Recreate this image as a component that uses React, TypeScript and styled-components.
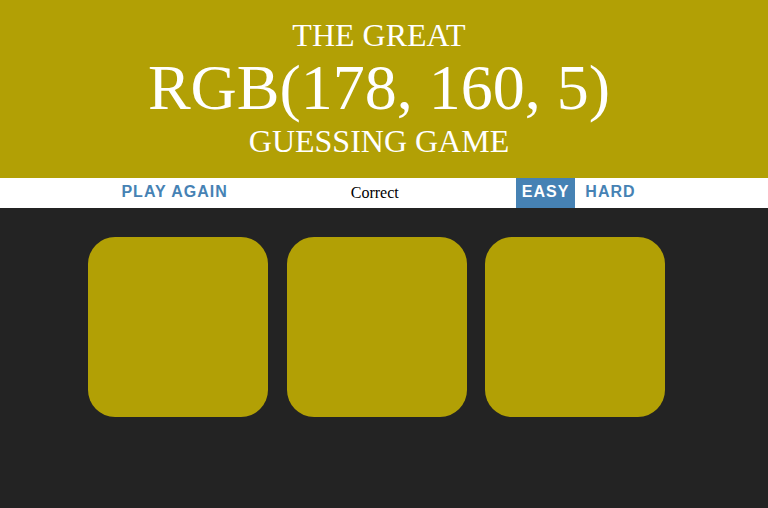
import React from "react";
import styled, { createGlobalStyle } from "styled-components";

const GAME_COLOR = "rgb(178, 160, 5)";

const GlobalStyle = createGlobalStyle`
  html, body {
    margin: 0;
    padding: 0;
    background: #232323;
  }
  body {
    font-family: "Liberation Serif", "Times New Roman", serif;
    font-size: 16px;
  }
`;

const Page = styled.div`
  padding-right: 15px;
`;

const Title = styled.h1<{ $bg: string }>`
  margin: 0 -15px 0 0;
  padding: 18px 10px 19px 0;
  background: ${(p) => p.$bg};
  color: #fff;
  text-align: center;
  text-transform: uppercase;
  font-weight: normal;
  font-size: 32px;
  line-height: 1.1;
`;

const ColorDisplay = styled.span`
  font-size: 200%;
`;

const Stripe = styled.div`
  margin-right: -15px;
  padding-right: 11px;
  height: 30px;
  background: #fff;
  display: flex;
  justify-content: center;
  align-items: stretch;
  gap: 4px;
`;

const StripeButton = styled.button<{ $selected?: boolean }>`
  border: none;
  margin: 0;
  padding: 0 6px 2px;
  height: 100%;
  background: ${(p) => (p.$selected ? "steelblue" : "none")};
  color: ${(p) => (p.$selected ? "#fff" : "steelblue")};
  font-family: "Liberation Sans", Arial, sans-serif;
  font-weight: 700;
  font-size: 16px;
  letter-spacing: 1px;
  text-transform: uppercase;
  outline: none;
  cursor: pointer;
`;

const Message = styled.span`
  width: 274px;
  display: flex;
  align-items: center;
  justify-content: center;
  color: #000;
  font-size: 16px;
`;

const Container = styled.div`
  max-width: 600px;
  margin: 19px auto;
  padding-top: 10px;
  display: flex;
  justify-content: center;
  gap: 18.6px;
`;

const Square = styled.div<{ $color: string }>`
  width: 30%;
  aspect-ratio: 1 / 1;
  border-radius: 15%;
  background: ${(p) => p.$color};
`;

export default function App() {
  const colors = [GAME_COLOR, GAME_COLOR, GAME_COLOR];
  return (
    <>
      <GlobalStyle />
      <Page>
        <Title $bg={GAME_COLOR}>
          The Great
          <br />
          <ColorDisplay>RGB(178, 160, 5)</ColorDisplay>
          <br />
          Guessing Game
        </Title>
        <Stripe>
          <StripeButton>Play Again</StripeButton>
          <Message>Correct</Message>
          <StripeButton $selected>Easy</StripeButton>
          <StripeButton>Hard</StripeButton>
        </Stripe>
        <Container>
          {colors.map((c, i) => (
            <Square key={i} $color={c} />
          ))}
        </Container>
      </Page>
    </>
  );
}
